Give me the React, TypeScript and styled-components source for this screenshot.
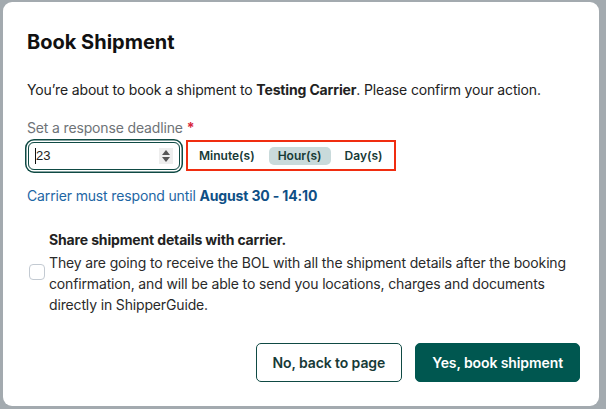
import styled, { createGlobalStyle } from 'styled-components';

const GlobalStyle = createGlobalStyle`
  html, body {
    margin: 0;
    padding: 0;
    background: #a3aaaf;
  }
  body {
    font-family: "Inter", "Noto Sans", sans-serif;
    -webkit-font-smoothing: antialiased;
  }
`;

const Backdrop = styled.div`
  width: 606px;
  height: 409px;
  padding: 2px 7px 3px 3px;
  box-sizing: border-box;
  background: #a3aaaf;
`;

const Dialog = styled.div`
  height: 100%;
  background: #ffffff;
  border-radius: 9px;
  box-sizing: border-box;
  padding: 26px 19px 24px 24px;
  display: flex;
  flex-direction: column;
  color: #1d1d1f;
  letter-spacing: -0.15px;
`;

const Title = styled.h1`
  margin: 0;
  font-size: 20px;
  line-height: 28px;
  font-weight: 700;
  color: #111;
  letter-spacing: 0;
`;

const Intro = styled.p`
  margin: 24px 0 0;
  font-size: 14px;
  line-height: 20px;
  color: #222;
  b {
    font-weight: 700;
  }
`;

const Label = styled.div`
  margin-top: 18px;
  font-size: 14px;
  line-height: 20px;
  color: #6e7377;
  span {
    color: #d7263d;
    font-weight: 700;
  }
`;

const InputRow = styled.div`
  margin-top: 2px;
  display: flex;
  align-items: center;
  gap: 6px;
`;

const NumberBox = styled.div`
  width: 152px;
  height: 28px;
  margin-left: 1px;
  border: 1.5px solid #0f4a44;
  border-radius: 6px;
  box-shadow: 0 0 0 1.5px #fff, 0 0 0 3px #0f4a44;
  display: flex;
  align-items: center;
  padding: 0 6px 0 6px;
  box-sizing: border-box;
`;

const NumberValue = styled.span`
  flex: 1;
  font-family: "Liberation Sans", Arial, sans-serif;
  font-size: 13px;
  letter-spacing: 0;
  color: #222;
  border-left: 1px solid #111;
  line-height: 16px;
`;

const Spinner = styled.div`
  width: 14px;
  height: 16px;
  background: #eeeeee;
  display: flex;
  flex-direction: column;
  align-items: center;
  justify-content: center;
  gap: 2px;
`;

const Arrow = styled.div<{ $up?: boolean }>`
  width: 0;
  height: 0;
  border-left: 4px solid transparent;
  border-right: 4px solid transparent;
  ${(p) => (p.$up ? 'border-bottom: 5px solid #555;' : 'border-top: 5px solid #555;')}
`;

const UnitGroup = styled.div`
  width: 210px;
  height: 31px;
  box-sizing: border-box;
  border: 2px solid #f02d10;
  display: flex;
  align-items: center;
  gap: 8px;
  padding: 0 8px 0 5px;
`;

const Unit = styled.div<{ $active?: boolean }>`
  font-size: 12px;
  font-weight: 600;
  letter-spacing: 0;
  color: #173a37;
  padding: 0 ${(p) => (p.$active ? '9px' : '6px')};
  height: 18px;
  line-height: 18px;
  border-radius: 5px;
  background: ${(p) => (p.$active ? '#c9dadb' : 'transparent')};
`;

const Deadline = styled.div`
  margin-top: 15px;
  font-size: 14px;
  line-height: 20px;
  color: #1d66a4;
  b {
    color: #0e4f86;
    font-weight: 700;
  }
`;

const ShareRow = styled.label`
  margin-top: 24px;
  display: flex;
  align-items: center;
  gap: 4px;
  padding-left: 2px;
`;

const Checkbox = styled.div`
  flex: none;
  width: 16px;
  height: 16px;
  box-sizing: border-box;
  border: 1px solid #c3cad2;
  border-radius: 4px;
  background: #fff;
  margin-top: -2px;
`;

const ShareText = styled.div`
  display: flex;
  flex-direction: column;
  gap: 2px;
`;

const ShareTitle = styled.div`
  font-size: 14px;
  font-weight: 700;
  line-height: 20px;
  color: #222;
`;

const ShareDesc = styled.div`
  font-size: 14px;
  line-height: 21px;
  color: #2a2a2a;
`;

const Footer = styled.div`
  margin-top: auto;
  display: flex;
  justify-content: flex-end;
  gap: 13px;
`;

const Button = styled.button<{ $primary?: boolean }>`
  height: 39px;
  padding: 0 16px;
  border-radius: 5px;
  font-family: inherit;
  font-size: 14px;
  font-weight: 600;
  letter-spacing: -0.1px;
  cursor: pointer;
  border: 1px solid #0f4a44;
  background: ${(p) => (p.$primary ? '#005750' : '#fff')};
  color: ${(p) => (p.$primary ? '#fff' : '#173a37')};
  border-color: ${(p) => (p.$primary ? '#005750' : '#0f4a44')};
`;

export default function App() {
  return (
    <>
      <GlobalStyle />
      <Backdrop>
        <Dialog>
          <Title>Book Shipment</Title>
          <Intro>
            You’re about to book a shipment to <b>Testing Carrier</b>. Please confirm your action.
          </Intro>
          <Label>
            Set a response deadline <span>*</span>
          </Label>
          <InputRow>
            <NumberBox>
              <NumberValue>23</NumberValue>
              <Spinner>
                <Arrow $up />
                <Arrow />
              </Spinner>
            </NumberBox>
            <UnitGroup>
              <Unit>Minute(s)</Unit>
              <Unit $active>Hour(s)</Unit>
              <Unit>Day(s)</Unit>
            </UnitGroup>
          </InputRow>
          <Deadline>
            Carrier must respond until <b>August 30 - 14:10</b>
          </Deadline>
          <ShareRow>
            <Checkbox />
            <ShareText>
              <ShareTitle>Share shipment details with carrier.</ShareTitle>
              <ShareDesc>
                They are going to receive the BOL with all the shipment details after the booking
                confirmation, and will be able to send you locations, charges and documents
                directly in ShipperGuide.
              </ShareDesc>
            </ShareText>
          </ShareRow>
          <Footer>
            <Button>No, back to page</Button>
            <Button $primary>Yes, book shipment</Button>
          </Footer>
        </Dialog>
      </Backdrop>
    </>
  );
}
